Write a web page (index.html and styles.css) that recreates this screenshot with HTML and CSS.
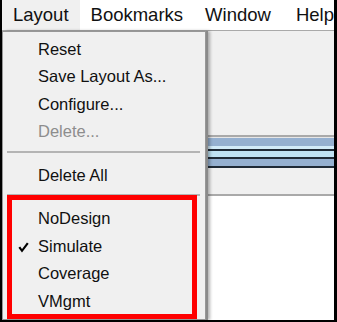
FILE: index.html
```html
<!DOCTYPE html>
<html lang="en">
<head>
  <meta charset="UTF-8">
  <title>Layout menu</title>
  <link rel="stylesheet" href="styles.css">
</head>
<body>
  <div class="screen">
    <!-- Menu bar -->
    <nav class="menubar">
      <span class="menubar-item open">Layout</span>
      <span class="menubar-item">Bookmarks</span>
      <span class="menubar-item wide">Window</span>
      <span class="menubar-item">Help</span>
    </nav>

    <!-- Window content behind the menu -->
    <div class="workspace">
      <div class="pane pane-top"></div>
      <div class="rule"></div>
      <div class="tabstrip">
        <div class="strip strip-gap"></div>
        <div class="strip strip-blue"></div>
        <div class="strip strip-light"></div>
        <div class="strip strip-dark"></div>
        <div class="strip strip-cyan"></div>
        <div class="strip strip-dark"></div>
        <div class="strip strip-blue2"></div>
        <div class="strip strip-dark"></div>
      </div>
      <div class="pane pane-mid"></div>
      <div class="rule"></div>
      <div class="pane-body"></div>
    </div>

    <!-- Open dropdown -->
    <ul class="dropdown">
      <li class="item">Reset</li>
      <li class="item">Save Layout As...</li>
      <li class="item">Configure...</li>
      <li class="item disabled">Delete...</li>
      <li class="sep"></li>
      <li class="item">Delete All</li>
      <li class="sep"></li>
      <li class="item">NoDesign</li>
      <li class="item checked">
        <svg class="check" width="11" height="11" viewBox="0 0 11 11">
          <path d="M1.3 5.2 L4 8.8 L9.8 1.2" fill="none" stroke="#000" stroke-width="2.2"/>
        </svg>
        Simulate
      </li>
      <li class="item">Coverage</li>
      <li class="item">VMgmt</li>
    </ul>

    <!-- Annotation box -->
    <div class="highlight-box"></div>
  </div>
</body>
</html>
```

FILE: styles.css
```css
/* Page */
body {
  margin: 0;
  background: #fff;
  font-family: "Liberation Sans", Arial, sans-serif;
  color: #000;
}

/* Screenshot frame */
.screen {
  position: relative;
  box-sizing: border-box;
  width: 337px;
  height: 322px;
  border-left: 2px solid #000;
  border-right: 3px solid #000;
  border-bottom: 2px solid #000;
  display: flex;
  flex-direction: column;
  overflow: hidden;
}

/* Menu bar */
.menubar {
  display: flex;
  height: 30px;
  background: #fff;
  border-bottom: 1px solid #a9a9a9;
  font-size: 18.5px;
  line-height: 30px;
  white-space: nowrap;
  color: #111;
}

.menubar-item {
  padding: 0 11px;
}

.menubar-item.wide {
  padding-right: 14px;
}

.menubar-item.open {
  background: #f0f0f0;
}

/* Content behind the menu */
.workspace {
  flex: 1;
  display: flex;
  flex-direction: column;
}

.pane {
  background: #f0f0f0;
}

.pane-top {
  height: 104px;
}

.pane-mid {
  height: 26px;
}

.rule {
  height: 2px;
  background: #a9a9a9;
}

.pane-body {
  flex: 1;
  background: #fff;
}

.tabstrip {
  display: flex;
  flex-direction: column;
}

.strip-gap { height: 1px; background: #e6e6e6; }
.strip-blue { height: 8px; background: #95b0d0; }
.strip-light { height: 3px; background: #d2ebf8; }
.strip-dark { height: 2px; background: #1f2a36; }
.strip-cyan { height: 6px; background: #bfe2f3; }
.strip-blue2 { height: 7px; background: #95b0d0; }

/* Dropdown menu */
.dropdown {
  position: absolute;
  top: 31px;
  left: 0;
  bottom: 0;
  box-sizing: border-box;
  width: 204px;
  margin: 0;
  padding: 3.5px 0 0;
  list-style: none;
  background: #f0f0f0;
  border: 1px solid #979797;
  box-shadow: 2px 0 0 #8a8a8a, 4px 0 3px rgba(0, 0, 0, 0.3);
  font-size: 16.5px;
  color: #111;
}

.item {
  position: relative;
  height: 27.5px;
  line-height: 27.5px;
  padding-left: 35px;
  white-space: nowrap;
}

.item.disabled {
  color: #8d8d8d;
}

.check {
  position: absolute;
  left: 15px;
  top: 9.5px;
}

.sep {
  height: 2px;
  margin: 5px 5px 9px 4px;
  background: #b4b4b4;
}

/* Red annotation */
.highlight-box {
  position: absolute;
  left: 5px;
  top: 195px;
  width: 190px;
  height: 124px;
  box-sizing: border-box;
  border: 5px solid #ff0000;
}
```
